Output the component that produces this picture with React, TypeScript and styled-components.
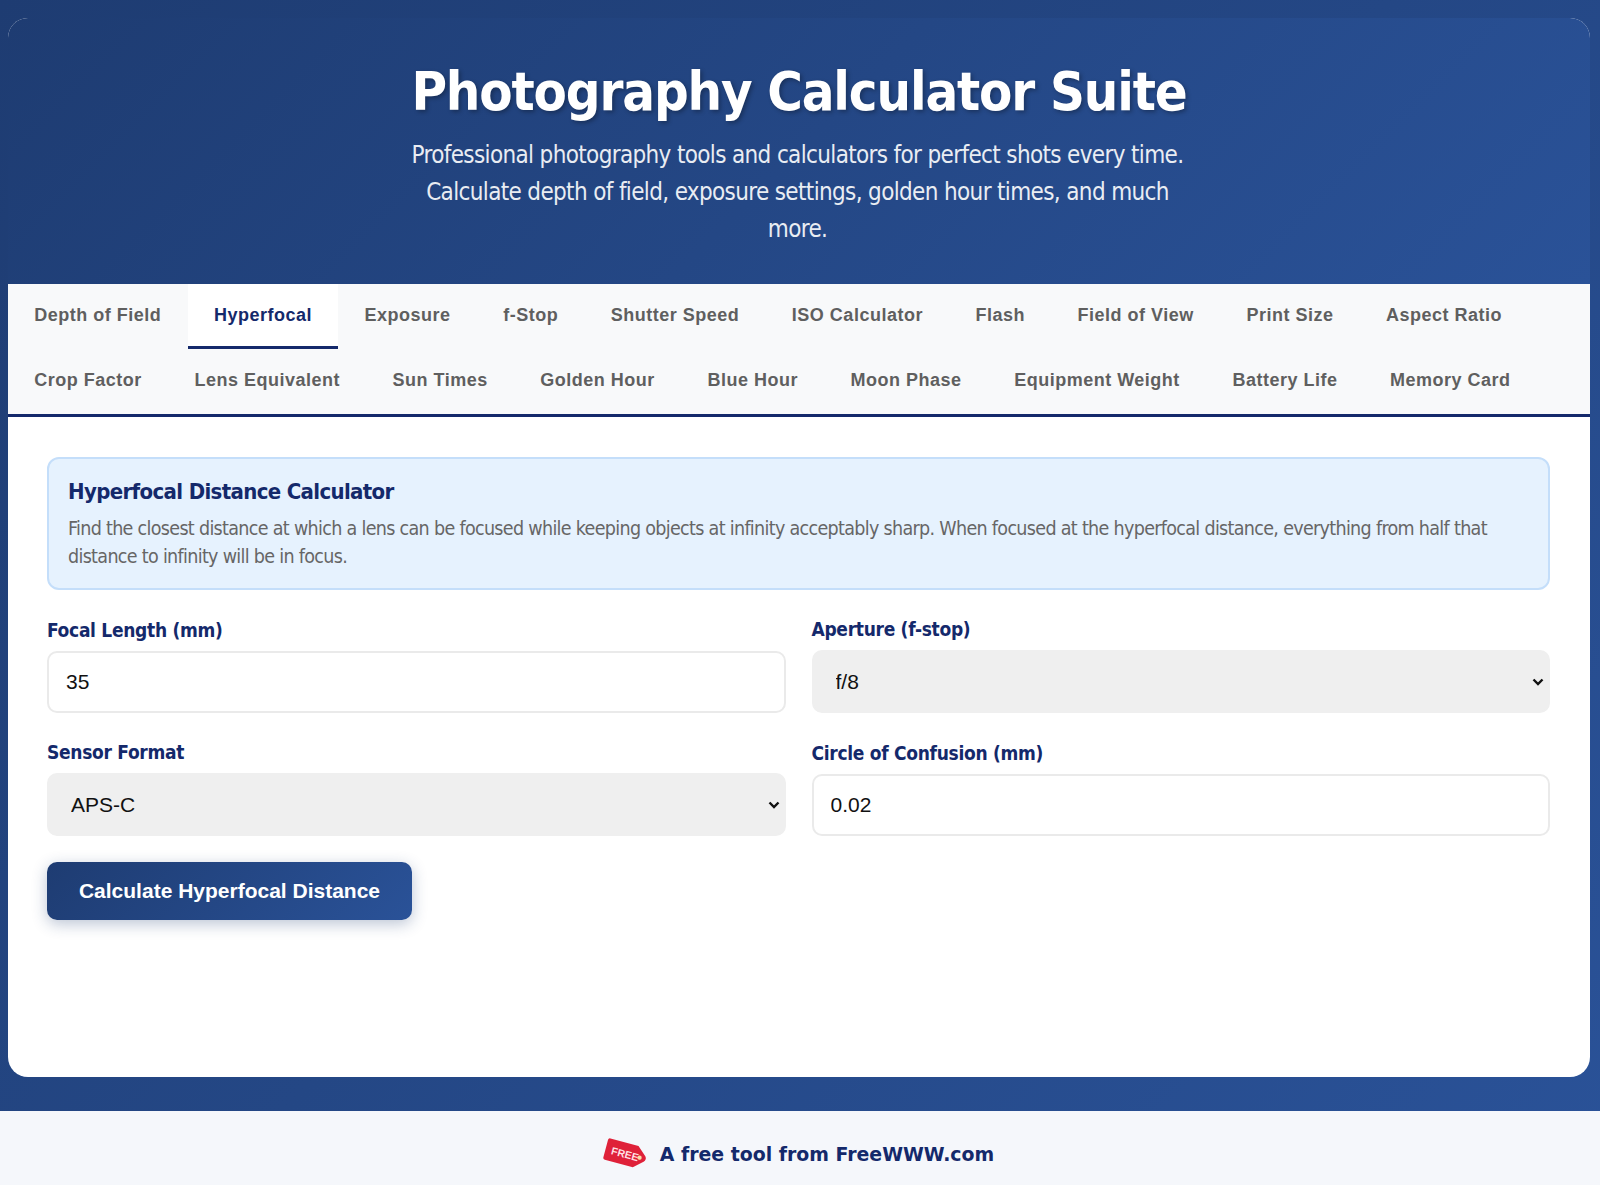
import styled, { createGlobalStyle } from 'styled-components';

const GlobalStyle = createGlobalStyle`
  * {
    box-sizing: border-box;
  }

  body {
    margin: 0;
    min-height: 1185px;
    background: linear-gradient(135deg, #1e3c72 0%, #2a5298 100%);
    font-family: 'DejaVu Sans Condensed', 'DejaVu Sans', sans-serif;
  }
`;

const chevron =
  "url(\"data:image/svg+xml,%3Csvg xmlns='http://www.w3.org/2000/svg' width='12' height='8' viewBox='0 0 12 8'%3E%3Cpath d='M1.5 1.5 6 6l4.5-4.5' fill='none' stroke='%23111' stroke-width='2.4'/%3E%3C/svg%3E\")";

const Page = styled.div`
  padding: 18px 10px 34px 8px;
`;

const Card = styled.div`
  background: #fff;
  border-radius: 20px;
  overflow: hidden;
  height: 1059px;
`;

const Header = styled.header`
  height: 266px;
  padding-top: 40px;
  text-align: center;
  color: #fff;
  background: linear-gradient(135deg, #1e3c72 0%, #2a5298 100%);
`;

const Title = styled.h1`
  margin: 0 0 12px;
  font-size: 54px;
  line-height: 67px;
  font-weight: 700;
  letter-spacing: -1.15px;
  text-shadow: 2px 2px 4px rgba(0, 0, 0, 0.3);
`;

const Subtitle = styled.p`
  margin: 0 auto;
  max-width: 800px;
  padding-right: 3px;
  font-size: 24px;
  line-height: 37px;
  letter-spacing: -0.65px;
  opacity: 0.9;
`;

const Tabs = styled.nav`
  display: flex;
  flex-wrap: wrap;
  background: #f8f9fa;
  border-bottom: 3px solid #14296b;
`;

const Tab = styled.button<{ $active?: boolean }>`
  height: 65px;
  padding: 0 26.3px;
  border: 0;
  border-bottom: 3px solid ${(p) => (p.$active ? '#14296b' : 'transparent')};
  background: ${(p) => (p.$active ? '#fff' : 'transparent')};
  color: ${(p) => (p.$active ? '#14296b' : '#5f5f5f')};
  font-family: 'Liberation Sans', Arial, sans-serif;
  font-size: 18px;
  font-weight: 700;
  letter-spacing: 0.5px;
`;

const Content = styled.main`
  padding: 40px 40px 0 39px;
`;

const InfoBox = styled.section`
  height: 133px;
  padding: 19px 19px;
  margin-bottom: 27px;
  background: #e6f2fe;
  border: 2px solid #c4defa;
  border-radius: 12px;
`;

const InfoTitle = styled.h3`
  margin: 0 0 9px;
  color: #14296b;
  font-size: 22px;
  line-height: 28px;
  font-weight: 700;
  letter-spacing: -0.65px;
`;

const InfoText = styled.p`
  margin: 0;
  color: #666;
  font-size: 19.5px;
  line-height: 27.5px;
  letter-spacing: -0.68px;
`;

const FormGrid = styled.div`
  display: grid;
  grid-template-columns: 1fr 1fr;
  column-gap: 26px;
  row-gap: 27px;
  align-items: end;
`;

const Field = styled.div`
  display: flex;
  flex-direction: column;
`;

const Label = styled.label`
  margin-bottom: 9px;
  color: #14296b;
  font-size: 19px;
  line-height: 24px;
  font-weight: 700;
  letter-spacing: -0.3px;
`;

const TextInput = styled.input`
  height: 62px;
  padding: 0 17px;
  background: #fff;
  border: 2px solid #eaeaea;
  border-radius: 10px;
  color: #111;
  font-family: 'Liberation Sans', Arial, sans-serif;
  font-size: 21px;
`;

const Select = styled.select`
  appearance: none;
  height: 63px;
  padding: 0 22px;
  background: #efefef ${chevron} no-repeat right 4px center;
  border: 2px solid #efefef;
  border-radius: 10px;
  color: #111;
  font-family: 'Liberation Sans', Arial, sans-serif;
  font-size: 21px;
`;

const CalcButton = styled.button`
  display: block;
  width: 365px;
  height: 58px;
  margin-top: 26px;
  border: 0;
  border-radius: 10px;
  background: linear-gradient(135deg, #1e3c72 0%, #2a5298 100%);
  box-shadow: 0 4px 15px rgba(30, 60, 114, 0.3);
  color: #fff;
  font-family: 'Liberation Sans', Arial, sans-serif;
  font-size: 21px;
  font-weight: 700;
`;

const Footer = styled.footer`
  display: flex;
  align-items: center;
  justify-content: center;
  gap: 11px;
  height: 75px;
  padding-top: 10px;
  padding-right: 3px;
  background: #f5f7fb;
  color: #14296b;
  font-family: 'DejaVu Sans', sans-serif;
  font-size: 18.9px;
  font-weight: 700;
`;

const FreeTag = () => (
  <svg width="46" height="36" viewBox="0 0 46 36">
    <g transform="rotate(15 23 18)">
      <path
        d="M4 7 h29 l9 8 a4 4 0 0 1 0 6 l-9 8 h-29 a2 2 0 0 1 -2 -2 v-18 a2 2 0 0 1 2 -2 z"
        fill="#df2139"
      />
      <circle cx="37" cy="18" r="2.2" fill="#f8dca8" />
      <text
        x="8"
        y="22"
        fill="#ffdfe3"
        fontFamily="'Liberation Sans', Arial, sans-serif"
        fontSize="10.5"
        fontWeight="700"
      >
        FREE
      </text>
    </g>
  </svg>
);

const firstRow = ['Depth of Field', 'Hyperfocal', 'Exposure', 'f-Stop', 'Shutter Speed', 'ISO Calculator', 'Flash', 'Field of View', 'Print Size', 'Aspect Ratio'];
const secondRow = ['Crop Factor', 'Lens Equivalent', 'Sun Times', 'Golden Hour', 'Blue Hour', 'Moon Phase', 'Equipment Weight', 'Battery Life', 'Memory Card'];

const App = () => {
  return (
    <>
      <GlobalStyle />
      <Page>
        <Card>
          <Header>
            <Title>Photography Calculator Suite</Title>
            <Subtitle>
              Professional photography tools and calculators for perfect shots every time. Calculate depth of
              field, exposure settings, golden hour times, and much more.
            </Subtitle>
          </Header>
          <Tabs>
            {[...firstRow, ...secondRow].map((name) => (
              <Tab key={name} $active={name === 'Hyperfocal'}>
                {name}
              </Tab>
            ))}
          </Tabs>
          <Content>
            <InfoBox>
              <InfoTitle>Hyperfocal Distance Calculator</InfoTitle>
              <InfoText>
                Find the closest distance at which a lens can be focused while keeping objects at infinity acceptably
                sharp. When focused at the hyperfocal distance, everything from half that distance to infinity will be
                in focus.
              </InfoText>
            </InfoBox>
            <FormGrid>
              <Field>
                <Label>Focal Length (mm)</Label>
                <TextInput type="number" defaultValue="35" />
              </Field>
              <Field>
                <Label>Aperture (f-stop)</Label>
                <Select defaultValue="f/8">
                  <option>f/5.6</option>
                  <option>f/8</option>
                  <option>f/11</option>
                </Select>
              </Field>
              <Field>
                <Label>Sensor Format</Label>
                <Select defaultValue="APS-C">
                  <option>Full Frame</option>
                  <option>APS-C</option>
                  <option>Micro Four Thirds</option>
                </Select>
              </Field>
              <Field>
                <Label>Circle of Confusion (mm)</Label>
                <TextInput type="number" step="0.01" defaultValue="0.02" />
              </Field>
            </FormGrid>
            <CalcButton>Calculate Hyperfocal Distance</CalcButton>
          </Content>
        </Card>
      </Page>
      <Footer>
        <FreeTag />
        A free tool from FreeWWW.com
      </Footer>
    </>
  );
};

export default App;
